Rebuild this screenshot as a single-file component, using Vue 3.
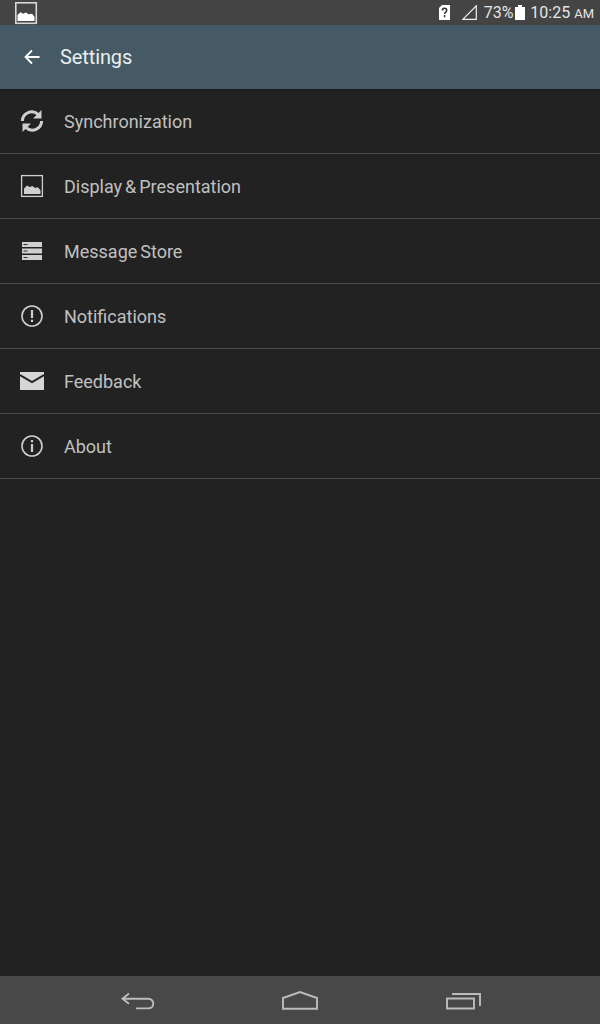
<script setup>
const rows = [
  { key: 'sync', label: 'Synchronization' },
  { key: 'display', label: 'Display & Presentation' },
  { key: 'store', label: 'Message Store' },
  { key: 'notif', label: 'Notifications' },
  { key: 'feedback', label: 'Feedback' },
  { key: 'about', label: 'About' },
]
</script>

<template>
  <div class="screen">
    <div class="status">
      <svg class="pic" width="24" height="24" viewBox="0 0 24 24">
        <rect x="1.800" y="1.800" width="20.500" height="20.500" fill="none" stroke="#d8d8d8" stroke-width="1.600" />
        <path d="M3.500 20v-6l3-2.800 2.500 1.600 3-1.200 2.500 1.700 3.500-.5 2.500 3V20z" fill="#fff" />
      </svg>
      <div class="status-right">
        <svg width="11" height="15" viewBox="0 0 11 15">
          <path d="M3 0h8v15H0V3z" fill="#fff" />
          <path d="M3.400 5.500c0-3 4.300-3 4.300 0 0 1.800-2.100 1.700-2.100 3.500M5.600 10v2.200" stroke="#333" stroke-width="1.500" fill="none" />
        </svg>
        <svg class="signal" width="15" height="15" viewBox="0 0 15 15">
          <path d="M.8 14.400 14.300.8v13.600z" fill="none" stroke="#f0f0f0" stroke-width="1.200" />
        </svg>
        <span class="pct">73%</span>
        <svg class="batt" width="10" height="15" viewBox="0 0 10 15">
          <path d="M3 0h4v2h3v13H0V2h3z" fill="#fff" />
        </svg>
        <span class="clock">10:25 <small>AM</small></span>
      </div>
    </div>

    <header class="bar">
      <svg class="back" width="16" height="16" viewBox="0 0 16 16">
        <path d="M15.500 8H1.500M8 1.500 1.500 8 8 14.500" fill="none" stroke="#fff" stroke-width="1.800" />
      </svg>
      <span class="title">Settings</span>
    </header>

    <ul class="list">
      <li v-for="r in rows" :key="r.key" class="row">
        <span class="ico">
          <svg v-if="r.key === 'sync'" width="24" height="24" viewBox="0 0 24 24">
            <path d="M2.400 12a9.300 9.300 0 0 1 15.600-6.700M21.600 12a9.300 9.300 0 0 1-15.600 6.700" fill="none" stroke="#cfcfcf" stroke-width="3" />
            <path d="M21.500 1v8.500H13zM2.500 23v-8.500H11z" fill="#cfcfcf" />
          </svg>
          <svg v-else-if="r.key === 'display'" width="24" height="24" viewBox="0 0 24 24">
            <rect x="1.600" y="1.600" width="20.800" height="20.800" fill="none" stroke="#cfcfcf" stroke-width="1.300" />
            <path d="M4 20v-5.500l3-3 2.500 1.600 3-1 2.500 2 2.800-.8 2.700 3V20z" fill="#cfcfcf" />
          </svg>
          <svg v-else-if="r.key === 'store'" width="24" height="24" viewBox="0 0 24 24">
            <path d="M2 3h20v5H2zM2 9.500h20v5H2zM2 16h20v5H2z" fill="#cfcfcf" />
            <path d="M3.500 5.500h4M3.500 12h4M3.500 18.500h4" stroke="#333" stroke-width="1" />
          </svg>
          <svg v-else-if="r.key === 'notif'" width="24" height="24" viewBox="0 0 24 24">
            <circle cx="12" cy="12" r="10" fill="none" stroke="#cfcfcf" stroke-width="1.600" />
            <path d="M12 6v8M12 15.800v2.200" stroke="#cfcfcf" stroke-width="2.200" />
          </svg>
          <svg v-else-if="r.key === 'feedback'" width="24" height="24" viewBox="0 0 24 24">
            <path d="M0 3h24v18H0z" fill="#d6d6d6" />
            <path d="M0 6 12 13 24 6" fill="none" stroke="#222" stroke-width="2" />
          </svg>
          <svg v-else width="24" height="24" viewBox="0 0 24 24">
            <circle cx="12" cy="12" r="10" fill="none" stroke="#cfcfcf" stroke-width="1.600" />
            <path d="M12 6v2.200M12 10v8" stroke="#cfcfcf" stroke-width="2.200" />
          </svg>
        </span>
        <span class="label">{{ r.label }}</span>
      </li>
    </ul>

    <nav class="nav">
      <svg width="36" height="20" viewBox="0 0 36 20">
        <path d="M10 3.500 3.500 8.800l6.500 5M3.500 8.800h26a4.800 4.800 0 0 1 0 9.600H17" fill="none" stroke="#bcbcbc" stroke-width="1.900" />
      </svg>
      <svg width="36" height="20" viewBox="0 0 36 20">
        <path d="M1 18.700V8L18 2l17 6v10.700z" fill="none" stroke="#bcbcbc" stroke-width="1.900" />
      </svg>
      <svg width="36" height="20" viewBox="0 0 36 20">
        <path d="M2 8.500h27v10H2zM7 4h28v12" fill="none" stroke="#bcbcbc" stroke-width="1.900" />
      </svg>
    </nav>
  </div>
</template>

<style>
html, body { margin: 0; background: #222; }
</style>

<style scoped>
.screen {
  width: 600px;
  height: 1024px;
  display: flex;
  flex-direction: column;
  background: #222222;
  font-family: Roboto, "Noto Sans", sans-serif;
  overflow: hidden;
}
.status {
  height: 25px;
  flex: none;
  background: #444444;
  display: flex;
  align-items: center;
  justify-content: space-between;
  padding: 0 6px 0 14px;
  color: #e4e4e4;
}
.status-right { display: flex; align-items: center; }
.status-right svg { flex: none; }
.signal { margin-left: 12px; }
.pct { font-size: 16px; margin-left: 7px; margin-right: 2px; }
.clock { font-size: 16px; margin-left: 5px; }
.clock small { font-size: 13px; }
.bar {
  height: 64px;
  flex: none;
  background: #455a64;
  display: flex;
  align-items: center;
  padding-left: 24px;
  color: #fff;
  box-shadow: 0 1px 3px rgba(0, 0, 0, 0.3);
}
.title { margin-left: 20px; font-size: 20px; color: #e9eff2; letter-spacing: -0.1px; }
.list { list-style: none; margin: 0; padding: 0; flex: 1; }
.row {
  height: 64px;
  border-bottom: 1px solid #4b4b4b;
  display: flex;
  align-items: center;
  padding-left: 20px;
}
.ico { width: 24px; height: 24px; display: flex; }
.label { margin-left: 20px; font-size: 18px; color: #c0c0c0; word-spacing: -1.5px; }
.nav {
  height: 48px;
  flex: none;
  background: #484848;
  display: flex;
  align-items: center;
  justify-content: center;
  gap: 127px;
}
</style>
